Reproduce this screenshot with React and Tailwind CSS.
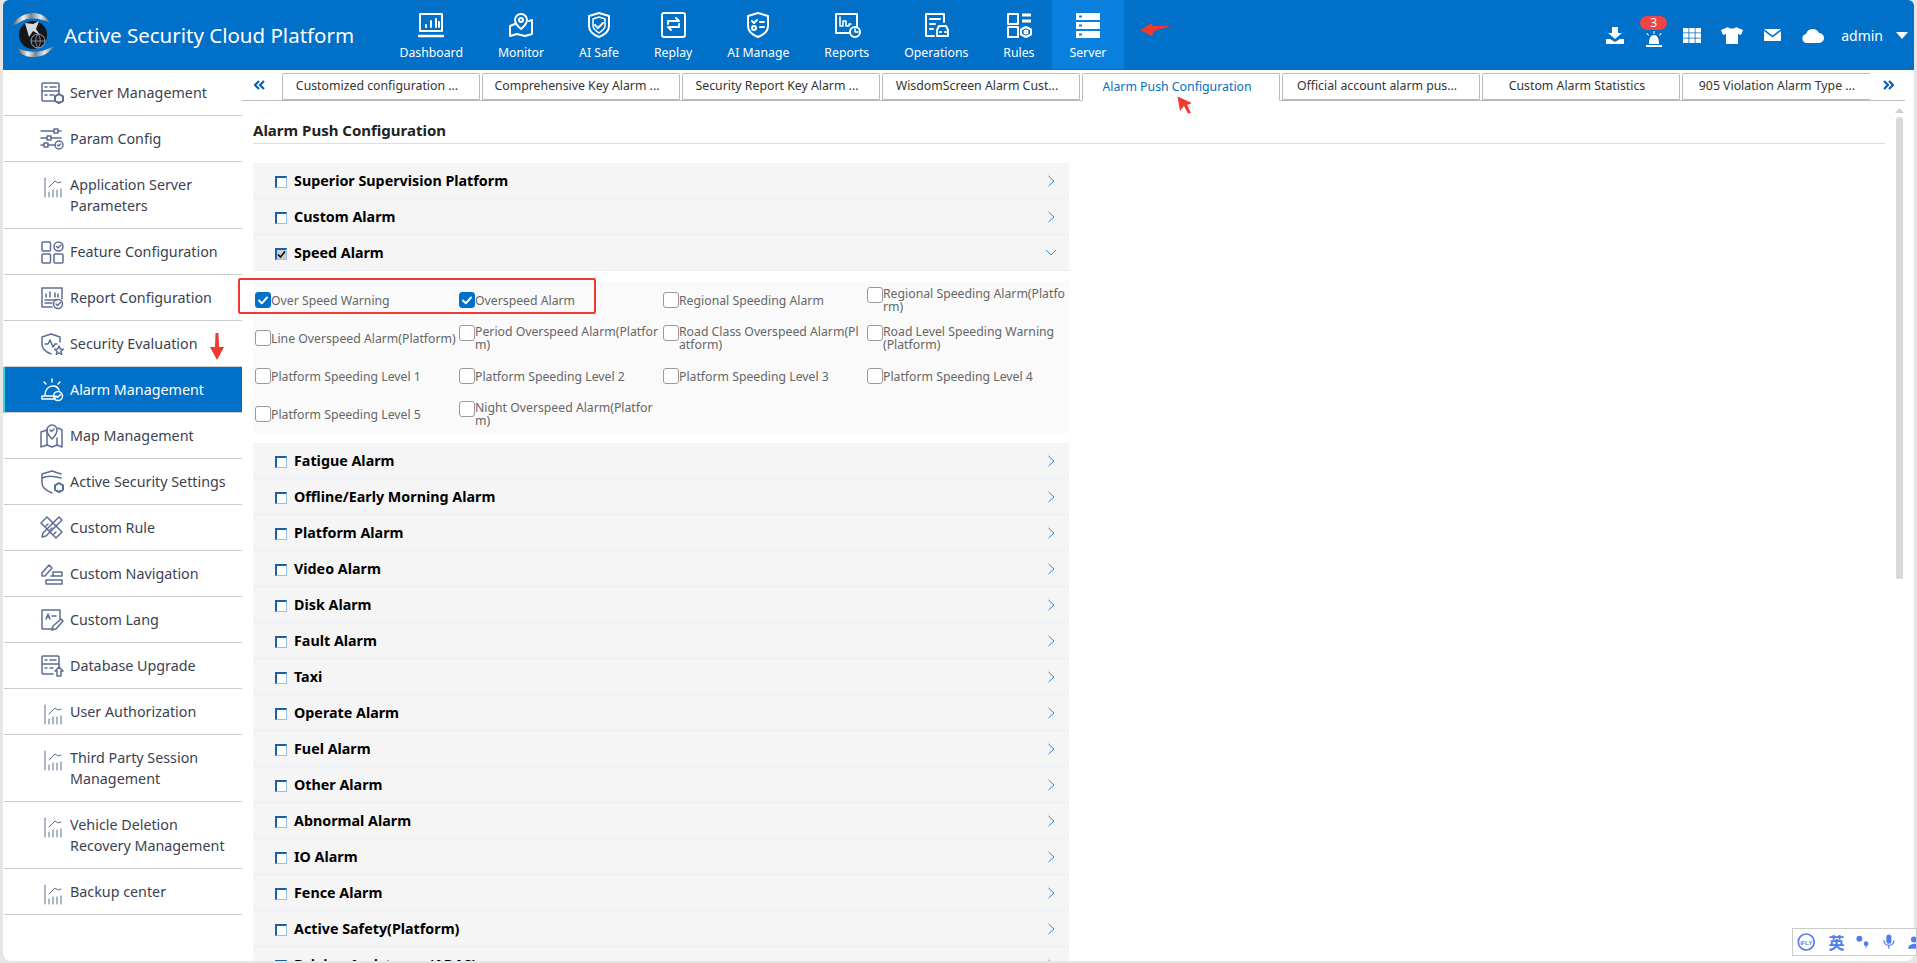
import React from "react";

const W = ({ children, w = 30, h = 26, vb = "0 0 30 26", sw = 2 }) => (
  <svg width={w} height={h} viewBox={vb} fill="none" stroke="white" strokeWidth={sw} strokeLinecap="round" strokeLinejoin="round">{children}</svg>
);

const navIcons = {
  Dashboard: <W><rect x="4" y="2" width="22" height="17" /><path d="M3 24h24" strokeWidth="2.4" /><path d="M10 15v-2M15 15v-6M20 15V7M23 15v-5" /></W>,
  Monitor: <W><path d="M9 12l-5 2v10l7-2 8 2 7-2V8l-3 1" /><path d="M15 2a6 6 0 0 1 6 6c0 4-6 9-6 9s-6-5-6-9a6 6 0 0 1 6-6z" /><circle cx="15" cy="8" r="2" /></W>,
  "AI Safe": <W><path d="M15 1l10 3v10c0 6-5 9-10 11-5-2-10-5-10-11V4z" /><path d="M15 5l6 2v7c0 3-3 5-6 7-3-2-6-4-6-7V7z" strokeWidth="1.5" /><path d="M11 13l3 3 5-5" /></W>,
  Replay: <W><rect x="4" y="1" width="23" height="24" rx="2" /><path d="M10 9h11l-3-3M21 15H10l3 3M10 9v3M21 15v-3" /></W>,
  "AI Manage": <W><path d="M15 1l10 3v10c0 6-5 9-10 11-5-2-10-5-10-11V4z" /><path d="M9 9l2 2 3-3M17 10h4M17 15h4" /><circle cx="11" cy="16" r="2" /></W>,
  Reports: <W><path d="M18 21H4V2h21v12" /><path d="M8 5v9h3v-5h3v5h3v-2h2" strokeWidth="1.6" /><circle cx="23" cy="20" r="5" /><path d="M23 17v3h3" strokeWidth="1.5" /></W>,
  Operations: <W><path d="M13 24H5V2h18v8" /><path d="M9 7h10M9 12h5M9 17h3" /><path d="M16 24v-6l2-4h7l2 4v6z" /><path d="M19 20h1M24 20h1" /></W>,
  Rules: <W><rect x="4" y="2" width="10" height="10" /><rect x="4" y="15" width="10" height="10" /><path d="M18 3h9M18 9h9" strokeWidth="3" strokeLinecap="butt" /><path d="M22 15l5 2.500v5L22 25l-5-2.500v-5z" /><circle cx="22" cy="20" r="1.500" /></W>,
  Server: <svg width="30" height="26" viewBox="0 0 30 26" fill="white"><path fillRule="evenodd" d="M3 1h24v7H3zM3 10h24v7H3zM3 19h24v7H3zM6 3.500v2h3v-2zM6 12.500v2h3v-2zM6 21.500v2h3v-2z" /></svg>,
};

const navItems = ["Dashboard", "Monitor", "AI Safe", "Replay", "AI Manage", "Reports", "Operations", "Rules", "Server"];

const S = ({ children, thin }) => (
  <svg width="24" height="24" viewBox="0 0 24 24" fill="none" stroke="currentColor" strokeWidth={thin ? 1 : 1.5} strokeLinecap="round" strokeLinejoin="round">{children}</svg>
);

const Thin = () => (
  <S thin><path d="M5 1v19" /><path d="M9 10l6-6 3 2 3-1" /><path d="M9 15v5M13 13v7M17 13v7M21 12v8" /></S>
);

const sideIcons = {
  server: <S><path d="M14 20H3a1.500 1.500 0 0 1-1-1.500V3a1.500 1.500 0 0 1 1-1h15a1.500 1.500 0 0 1 1 1v10" /><path d="M2 10h17" /><path d="M5 6h2M10 6h6M5 14h2M10 14h4" /><path d="M19 13l4 2.300v4.500L19 22l-4-2.200v-4.500z" strokeWidth="2" /></S>,
  param: <S><path d="M1 4h13M18 4h3M1 11h6M11 11h10M1 18h3M8 18h7" /><rect x="14" y="2" width="4" height="4" /><rect x="7" y="9" width="4" height="4" /><rect x="4" y="16" width="4" height="4" /><circle cx="19" cy="18" r="4" /><path d="M17.500 18l1 1 2-2" /></S>,
  feature: <S><rect x="2" y="2" width="8.500" height="9" rx="1" /><rect x="2" y="14" width="8.500" height="9" rx="1" /><rect x="14" y="14" width="9" height="9" rx="1" /><circle cx="18.500" cy="6.500" r="4.500" /><path d="M16.500 6.500l1.500 1.500 3-3" /></S>,
  report: <S><path d="M12 21H2V2h20v11" /><path d="M6 11V8M10 11V6M15 11V7M18 11V8" /><path d="M5 14h11M5 17h7" /><circle cx="18" cy="18" r="4.500" /><path d="M16 18l1.500 1.500 3-3" /></S>,
  security: <S><path d="M11 22c-5-2-9-5-9-10V5l9-3 9 3v5" /><path d="M5 12h3l2-4 3 7 2-3h2" /><path d="M19 14l1.300 3 3 .3-2.300 2 .7 3-2.700-1.500-2.700 1.500.7-3-2.300-2 3-.3z" /></S>,
  alarm: <S><path d="M5 17c0-5 3-9 8-9 2.500 0 5 1.200 6 4" /><path d="M2 18h13v3H2z" /><path d="M12 1v3M4 4l2 2M20 4l-2 2" /><circle cx="18" cy="18" r="4.500" /><path d="M16 18l1.500 1.500 3-3" /></S>,
  map: <S><path d="M7 6L1 8v15l6-2 5 2 5-2 5 2V6l-4-2" /><path d="M7 6v15M17 14v7" /><path d="M12 1a5 5 0 0 1 5 5c0 4-5 9-5 9s-5-5-5-9a5 5 0 0 1 5-5z" /><path d="M10 6l1.500 1.500L14 5" /></S>,
  active: <S><path d="M12 23c-5-2-10-5-10-10V4l10-3 9 3" /><path d="M2 8c4-2 12-2 19 0" /><path d="M19 13l4 2.300v4.500L19 22l-4-2.200v-4.500z" strokeWidth="2" /></S>,
  rule: <S><path d="M7 1L1 7l15 15 6-6z" /><path d="M6 10l2-2M10 14l2-2M14 18l2-2" /><path d="M19 1l3 3L6 20l-4 1 1-4z" /></S>,
  nav: <S><path d="M2 11l7-8 3 3-7 8H2z" /><path d="M13 10h9v4h-9zM6 18h16v4H6z" /><path d="M11 14h2" /></S>,
  lang: <S><path d="M13 21H2V2h18v9" /><path d="M6 11l2-5 2 5M7 9h2M12 8h4" /><path d="M21 11l2 2-7 8-4 1 1-4z" /></S>,
  db: <S><path d="M13 20H3a1.500 1.500 0 0 1-1-1.500V3a1.500 1.500 0 0 1 1-1h15a1.500 1.500 0 0 1 1 1v10" /><path d="M2 10h17" /><path d="M5 6h2M10 6h6M5 14h2M10 14h3" /><path d="M19 13l4 4h-2v5h-4v-5h-2z" /></S>,
};

const sideItems = [
  { k: "server", t: ["Server Management"] },
  { k: "param", t: ["Param Config"] },
  { k: "thin", t: ["Application Server", "Parameters"] },
  { k: "feature", t: ["Feature Configuration"] },
  { k: "report", t: ["Report Configuration"] },
  { k: "security", t: ["Security Evaluation"] },
  { k: "alarm", t: ["Alarm Management"], active: true },
  { k: "map", t: ["Map Management"] },
  { k: "active", t: ["Active Security Settings"] },
  { k: "rule", t: ["Custom Rule"] },
  { k: "nav", t: ["Custom Navigation"] },
  { k: "lang", t: ["Custom Lang"] },
  { k: "db", t: ["Database Upgrade"] },
  { k: "thin", t: ["User Authorization"] },
  { k: "thin", t: ["Third Party Session", "Management"] },
  { k: "thin", t: ["Vehicle Deletion", "Recovery Management"] },
  { k: "thin", t: ["Backup center"] },
];

const tabs = [
  "Customized configuration ...",
  "Comprehensive Key Alarm ...",
  "Security Report Key Alarm ...",
  "WisdomScreen Alarm Cust...",
  "Alarm Push Configuration",
  "Official account alarm pus...",
  "Custom Alarm Statistics",
  "905 Violation Alarm Type ...",
];

const rowsTop = ["Superior Supervision Platform", "Custom Alarm", "Speed Alarm"];
const rowsBottom = [
  "Fatigue Alarm", "Offline/Early Morning Alarm", "Platform Alarm", "Video Alarm", "Disk Alarm", "Fault Alarm", "Taxi",
  "Operate Alarm", "Fuel Alarm", "Other Alarm", "Abnormal Alarm", "IO Alarm", "Fence Alarm", "Active Safety(Platform)", "Driving Assistance (ADAS)",
];

const options = [
  [["Over Speed Warning"], true], [["Overspeed Alarm"], true], [["Regional Speeding Alarm"]], [["Regional Speeding Alarm(Platfo", "rm)"]],
  [["Line Overspeed Alarm(Platform)"]], [["Period Overspeed Alarm(Platfor", "m)"]], [["Road Class Overspeed Alarm(Pl", "atform)"]], [["Road Level Speeding Warning", "(Platform)"]],
  [["Platform Speeding Level 1"]], [["Platform Speeding Level 2"]], [["Platform Speeding Level 3"]], [["Platform Speeding Level 4"]],
  [["Platform Speeding Level 5"]], [["Night Overspeed Alarm(Platfor", "m)"]],
];

function Row({ label, open }) {
  return (
    <div className="h-[36px] shrink-0 flex items-center bg-[#f5f5f5] border-b border-[#ebeef5] pl-[22px] pr-[12px]">
      <span className={"w-[12px] h-[12px] mt-[2px] border-t-2 border-l-2 border-r border-b border-t-[#1c5fa8] border-l-[#1c5fa8] border-r-[#93c0f0] border-b-[#93c0f0] flex items-center justify-center " + (open ? "bg-[#cfcfcf]" : "bg-white")}>
        {open && <svg width="9" height="9" viewBox="0 0 9 9" fill="none" stroke="black" strokeWidth="1.6"><path d="M1 4.500l2.500 2.500L8 1.500" /></svg>}
      </span>
      <span className="ml-[7px] flex-1 text-[14.3px] font-bold text-black">{label}</span>
      {open ? (
        <svg width="12" height="8" viewBox="0 0 12 8" fill="none" stroke="#2b8ad6" strokeWidth="1"><path d="M1 1l5 5 5-5" /></svg>
      ) : (
        <svg width="12" height="12" viewBox="0 0 12 12" fill="none" stroke="#2b8ad6" strokeWidth="1"><path d="M3.500 1l5.500 5-5.500 5" /></svg>
      )}
    </div>
  );
}

function Option({ lines, checked }) {
  const two = lines.length > 1;
  return (
    <div className={"h-[38px] flex " + (two ? "items-start pt-[6px]" : "items-center")}>
      <span className={"w-[16px] h-[16px] shrink-0 rounded-[3px] border flex items-center justify-center " + (checked ? "bg-[#0070c9] border-[#0070c9]" : "bg-white border-[#9a9a9a]")}>
        {checked && <svg width="12" height="12" viewBox="0 0 12 12" fill="none" stroke="white" strokeWidth="2" strokeLinecap="round" strokeLinejoin="round"><path d="M2 6.500l2.800 2.800L10 3.500" /></svg>}
      </span>
      <span className="text-[12.25px] leading-[13px] text-[#666] whitespace-nowrap">
        {lines.map((l) => <div key={l}>{l}</div>)}
      </span>
    </div>
  );
}

function Arrow({ className, d, vb, w, h }) {
  return (
    <svg className={"absolute " + className} width={w} height={h} viewBox={vb} fill="#f0392f"><path d={d} /></svg>
  );
}

function Chevrons({ right }) {
  return (
    <svg width="11" height="10" viewBox="0 0 11 10" fill="none" stroke="#0a5fb8" strokeWidth="2.200">
      <path d={right ? "M1 1l4 4-4 4M6 1l4 4-4 4" : "M5 1L1 5l4 4M10 1L6 5l4 4"} />
    </svg>
  );
}

export default function App() {
  return (
    <div className="relative h-[963px] w-[1917px] overflow-hidden bg-[#e6e6e6] pl-[3px] pr-[3px] pb-[2px] flex flex-col text-[14px]" style={{ fontFamily: '"Noto Sans", "Liberation Sans", sans-serif' }}>
      <header className="h-[70px] shrink-0 bg-[#0070c8] rounded-t-[6px] flex items-stretch text-white">
        <div className="w-[379px] flex items-center pl-[8px]">
          <svg width="45" height="44" viewBox="0 0 45 44">
            <defs>
              <linearGradient id="sil" x1="0" y1="0" x2="1" y2="0"><stop offset="0" stopColor="#50565c" /><stop offset="0.3" stopColor="#f2f2f2" /><stop offset="0.5" stopColor="#7b838a" /><stop offset="0.75" stopColor="#e6e9ec" /><stop offset="1" stopColor="#5c636a" /></linearGradient>
            </defs>
            <path d="M1 13C6 3 16 0 22 0 30 0 36 4 39 10 30 5 18 4 11 8 7 10 4 12 1 13z" fill="url(#sil)" />
            <path d="M43 33C38 42 28 44 22 44 14 44 9 41 6 35 14 39 26 40 34 37 38 35 41 34 43 33z" fill="url(#sil)" />
            <circle cx="22" cy="22" r="14" fill="#15161a" />
            <path d="M14 10l8 1 6-3-3 8 4 6-7-4-4 6z" fill="#d6d9dd" />
            <circle cx="27" cy="28" r="7" fill="none" stroke="#9aa0a6" strokeWidth="1" />
            <path d="M20 28h14M27 21c-3 4-3 10 0 14M27 21c3 4 3 10 0 14" fill="none" stroke="#9aa0a6" strokeWidth="0.8" />
          </svg>
          <span className="ml-[8px] text-[20.5px] whitespace-nowrap">Active Security Cloud Platform</span>
        </div>
        <nav className="flex items-stretch">
          {navItems.map((n) => (
            <div key={n} className={"px-[17.5px] flex flex-col items-center pt-[12px] " + (n === "Server" ? "bg-[#0a80de] mb-[1px]" : "")}>
              {navIcons[n]}
              <span className="text-[12.25px] leading-[16px] mt-[7px] whitespace-nowrap">{n}</span>
            </div>
          ))}
        </nav>
        <div className="flex-1" />
        <div className="flex items-center pr-[6px]">
          <svg width="18" height="17" viewBox="0 0 18 17" fill="white"><path d="M6 0h6v6h4l-7 6-7-6h4zM0 12h4l5 3 5-3h4v5H0z" /></svg>
          <div className="relative ml-[20px]">
            <svg width="20" height="16" viewBox="0 0 20 16" fill="white" className="mt-[8px]"><path d="M5 13c0-6 2-9 5-9s5 3 5 9zM2 14h16v2H2zM9.500 0h1v3h-1zM3 2l2 2-.7.7-2-2zM17 2l-2 2 .7.7 2-2z" /></svg>
            <span className="absolute -top-[7px] -left-[4px] w-[27px] h-[14px] rounded-full bg-[#ef4444] text-[12px] leading-[14px] text-center">3</span>
          </div>
          <svg className="ml-[19px]" width="18" height="15" viewBox="0 0 18 15" fill="white">
            <rect x="0" y="0" width="5.500" height="4.500" /><rect x="6.300" y="0" width="5.400" height="4.500" /><rect x="12.500" y="0" width="5.500" height="4.500" />
            <rect x="0" y="5.250" width="5.500" height="4.500" /><rect x="6.300" y="5.250" width="5.400" height="4.500" /><rect x="12.500" y="5.250" width="5.500" height="4.500" />
            <rect x="0" y="10.500" width="5.500" height="4.500" /><rect x="6.300" y="10.500" width="5.400" height="4.500" /><rect x="12.500" y="10.500" width="5.500" height="4.500" />
          </svg>
          <svg className="ml-[20px]" width="22" height="17" viewBox="0 0 22 17" fill="white"><path d="M7 0L0 3l2 5 3-1v10h12V7l3 1 2-5-7-3c-1 2-7 2-8 0z" /></svg>
          <svg className="ml-[21px]" width="17" height="12" viewBox="0 0 17 12" fill="white"><path d="M0 0h17L8.500 6.500zM0 2l8.500 6.500L17 2v10H0z" /></svg>
          <svg className="ml-[21px]" width="22" height="15" viewBox="0 0 22 15" fill="white"><path d="M5 15a4.500 4.500 0 0 1-1-8.900A7 7 0 0 1 17 5a5 5 0 0 1 0 10z" /></svg>
          <span className="ml-[17px] text-[14px]">admin</span>
          <svg className="ml-[13px]" width="12" height="7" viewBox="0 0 12 7" fill="white"><path d="M0 0h12L6 7z" /></svg>
        </div>
      </header>

      <div className="flex-1 min-h-0 flex bg-white rounded-b-[8px] overflow-hidden">
        <aside className="w-[239px] shrink-0">
          {sideItems.map((s, i) => (
            <div key={i} className={"flex items-start pt-[11px] border-b border-b-[#ccc] " + (s.t.length > 1 ? "h-[67px]" : "h-[46px]") + (s.active ? " bg-[#0070c8] text-white border-l-[2px] border-l-[#37d6df] pl-[35px]" : " text-[#3b4252] ml-[1px] pl-[36px]")}>
              <span className={"w-[24px] h-[24px] shrink-0 mr-[6px] " + (s.active ? "text-white" : "text-[#5d6d92]") + (s.k === "thin" ? " mt-[4px]" : "")}>
                {s.k === "thin" ? <Thin /> : sideIcons[s.k]}
              </span>
              <span className="text-[14.3px] leading-[21px] whitespace-nowrap pt-[1px]">
                {s.t.map((l) => <div key={l}>{l}</div>)}
              </span>
            </div>
          ))}
        </aside>

        <main className="flex-1 min-w-0 flex flex-col">
          <div className="h-[28px] shrink-0 mt-[3px] mr-[9px] flex items-start border-b border-[#bbb]">
            <span className="w-[40px] shrink-0 pl-[12px] pt-[7px]"><Chevrons /></span>
            <div className="flex gap-[2px] w-[1588px] shrink-0 overflow-hidden h-[28px]">
              {tabs.map((t, i) => (
                <div key={t} className={"w-[198px] shrink-0 rounded-t-[2px] border border-[#bbb] flex items-center justify-center pr-[8px] text-[12.3px] whitespace-nowrap " + (i === 4 ? "h-[28px] bg-white text-[#0070c8] border-b-white" : "h-[27px] bg-white text-[#333]")}>
                  {t}
                </div>
              ))}
            </div>
            <span className="pl-[13px] pt-[7px]"><Chevrons right /></span>
          </div>

          <div className="flex-1 min-h-0 flex">
            <div className="flex-1 min-w-0 pl-[11px] pr-[8px] overflow-hidden">
              <div className="h-[43px] border-b border-[#ddd] flex items-end pb-[2px] text-[15px] font-bold text-[#222]">Alarm Push Configuration</div>
              <div className="w-[816px] pt-[19px]">
                {rowsTop.map((r) => <Row key={r} label={r} open={r === "Speed Alarm"} />)}
                <div className="mt-[10px] mb-[10px] h-[152px] bg-[#fafafa] pl-[2px] grid grid-cols-[204px_204px_204px_204px] content-start">
                  {options.map(([l, c]) => <Option key={l[0]} lines={l} checked={c} />)}
                </div>
                {rowsBottom.map((r) => <Row key={r} label={r} />)}
              </div>
            </div>
            <div className="w-[13px] mr-[8px] mt-[7px] flex flex-col items-center shrink-0">
              <svg width="9" height="5" viewBox="0 0 9 5" fill="#cfcfcf"><path d="M4.500 0L9 5H0z" /></svg>
              <div className="w-[7px] h-[462px] mt-[4px] bg-[#d9dadc] rounded-t-[3px]" />
            </div>
          </div>
        </main>
      </div>

      {/* red annotations */}
      <div className="absolute left-[238px] top-[278px] w-[358px] h-[36px] border-2 border-[#f0392f] rounded-[2px]" />
      <Arrow className="left-[1140px] top-[22px]" w={32} h={15} vb="0 0 32 15" d="M0 8L12 1v3l19 0L14 9l-2 5z" />
      <Arrow className="left-[1177px] top-[96px]" w={16} h={18} vb="0 0 16 18" d="M.5.5L15 7l-5 2 4 8-3 .5-4-7.500-4 5z" />
      <Arrow className="left-[210px] top-[333px]" w={14} h={27} vb="0 0 14 27" d="M5.500 0h3l.5 14h5L7 27 0 14h5z" />

      {/* IME toolbar */}
      <div className="absolute right-0 top-[928px] w-[125px] h-[28px] bg-white border border-[#ccc] flex items-center pl-[4px] text-[#4f7df0]">
        <svg width="22" height="22" viewBox="0 0 22 22"><circle cx="11" cy="11" r="9.500" fill="none" stroke="#4f7df0" strokeWidth="2" /><text x="11" y="14" textAnchor="middle" fontSize="7" fontWeight="700" fill="#4f7df0" fontFamily="Liberation Sans">iFLY</text></svg>
        <span className="ml-[13px] text-[16px] font-bold" style={{ fontFamily: '"Noto Sans CJK SC", sans-serif' }}>英</span>
        <svg className="ml-[12px]" width="16" height="18" viewBox="0 0 16 18" fill="#4f7df0"><circle cx="4" cy="5" r="3.500" /><circle cx="12" cy="11" r="2.800" /><path d="M12 13l2 0-3 4z" /></svg>
        <svg className="ml-[13px]" width="14" height="18" viewBox="0 0 14 18"><rect x="4" y="0" width="6" height="11" rx="3" fill="#4f7df0" /><path d="M1 7c0 8 12 8 12 0M7 13v4" fill="none" stroke="#4f7df0" strokeWidth="1.500" /></svg>
        <svg className="ml-[13px]" width="10" height="16" viewBox="0 0 10 16" fill="#4f7df0"><circle cx="7" cy="5" r="3.500" /><path d="M0 16c0-4 4-6 10-6v6z" /></svg>
      </div>
    </div>
  );
}
